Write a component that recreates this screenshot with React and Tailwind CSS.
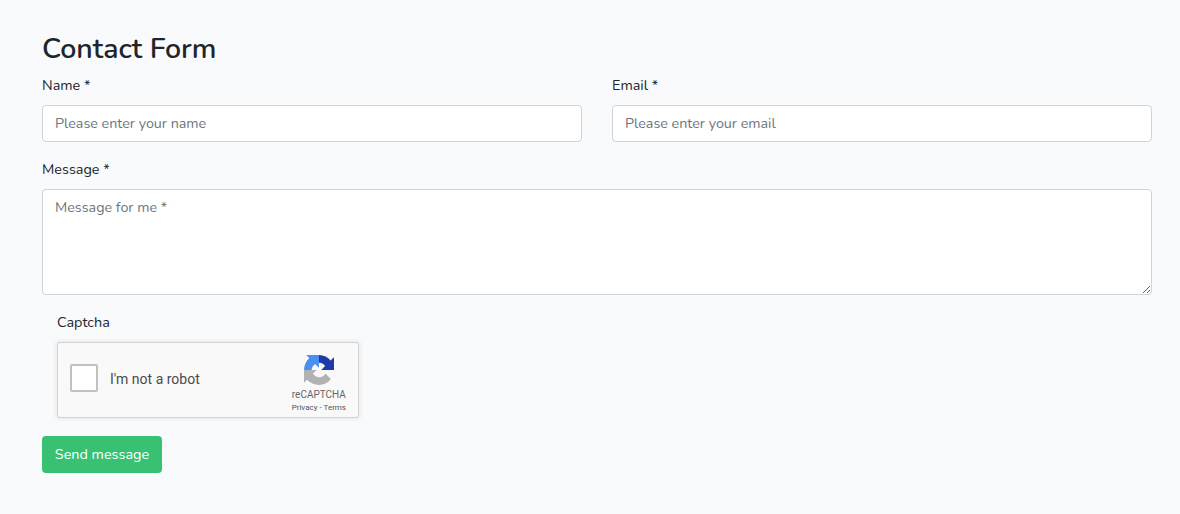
import React from 'react';

const font = "font-['Nunito','Lato','Open_Sans',sans-serif]";

const Field = ({ label, placeholder }) => (
  <div className="flex-1">
    <label className="block h-[23px] text-[14.4px] leading-[23px] text-[#212529]">{label}</label>
    <input
      placeholder={placeholder}
      className="mt-[8px] block h-[37px] w-full rounded-[4px] border border-[#ced4da] bg-white px-3 text-[14.3px] outline-none placeholder:text-[#6c757d]"
    />
  </div>
);

const RecaptchaLogo = () => (
  <svg viewBox="0 0 64 64" className="h-[30px] w-[30px]">
    <path fill="#1c3aa9" d="M64 31.955l-.033-1.37V4.687l-7.16 7.16C50.948 4.674 42.033.093 32.05.093c-10.4 0-19.622 4.96-25.458 12.64l11.736 11.86a15.55 15.55 0 0 1 4.754-5.334c2.05-1.6 4.952-2.906 8.968-2.906.485 0 .86.057 1.135.163 4.976.393 9.288 3.14 11.828 7.124l-8.307 8.307 32.295.008" />
    <path fill="#4a90f2" d="M31.862.001l-1.37.033H4.594l7.16 7.16C4.58 13.053 0 21.968 0 31.95c0 10.4 4.96 19.622 12.64 25.458L24.5 45.672a15.55 15.55 0 0 1-5.334-4.754c-1.6-2.05-2.906-4.952-2.906-8.968 0-.485.057-.86.163-1.135.393-4.976 3.14-9.288 7.124-11.828l8.307 8.307L31.862.001" />
    <path fill="#b2b2b2" d="M.001 31.95l.033 1.37v25.898l7.16-7.16c5.86 7.173 14.775 11.754 24.76 11.754 10.4 0 19.622-4.96 25.458-12.64l-11.736-11.86a15.55 15.55 0 0 1-4.754 5.334c-2.05 1.6-4.952 2.906-8.968 2.906-.485 0-.86-.057-1.135-.163-4.976-.393-9.288-3.14-11.828-7.124l8.307-8.307-32.295-.008" />
  </svg>
);

const Recaptcha = () => (
  <div className="flex h-[76px] w-[302px] items-center rounded-[3px] border border-[#d3d3d3] bg-[#f9f9f9] pl-[12px] pr-[12px] shadow-[0_0_4px_1px_rgba(0,0,0,0.08)] font-['Roboto',sans-serif]">
    <div className="mb-[4px] h-[28px] w-[28px] rounded-[2px] border-2 border-[#c1c1c1] bg-white" />
    <span className="mb-[2px] ml-[12px] flex-1 text-[14px] text-[#4a4a4a]">I'm not a robot</span>
    <div className="flex flex-col items-center pt-[9px]">
      <RecaptchaLogo />
      <div className="mt-[4px] text-[10px] leading-[12px] text-[#666666]">reCAPTCHA</div>
      <div className="mt-[1px] text-[8px] leading-[12px] text-[#555555]">Privacy - Terms</div>
    </div>
  </div>
);

export default function App() {
  return (
    <div className={`${font} h-[514px] bg-[#f8fafc] pl-[42px] pr-[28px] pt-[30px]`}>
      {/* Title */}
      <h2 className="h-[37px] text-[28.5px] font-semibold leading-[37px] text-[#212529]">Contact Form</h2>

      <div className="mt-[7px] flex gap-[30px]">
        <Field label="Name *" placeholder="Please enter your name" />
        <Field label="Email *" placeholder="Please enter your email" />
      </div>

      {/* Message */}
      <div className="mt-[16px]">
        <label className="block h-[23px] text-[14.4px] leading-[23px] text-[#212529]">Message *</label>
        <textarea
          placeholder="Message for me *"
          className="mt-[8px] block h-[106px] w-full rounded-[4px] border border-[#ced4da] bg-white px-3 py-[7px] text-[14.3px] leading-[21px] outline-none placeholder:text-[#6c757d]"
        />
      </div>

      {/* Captcha */}
      <div className="mt-[16px] pl-[15px]">
        <label className="block h-[23px] text-[14.4px] leading-[23px] text-[#212529]">Captcha</label>
        <div className="mt-[8px]">
          <Recaptcha />
        </div>
      </div>

      <button className="mt-[18px] block h-[37px] w-[120px] rounded-[4px] bg-[#38c172] text-[14.4px] text-white">
        Send message
      </button>
    </div>
  );
}
